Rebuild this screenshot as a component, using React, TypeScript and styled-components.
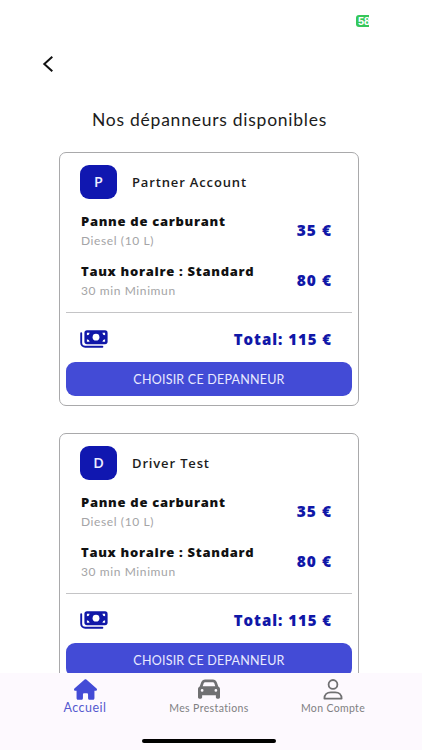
import React from "react";
import styled, { createGlobalStyle } from "styled-components";
import { FaHouse, FaCar } from "react-icons/fa6";

const GlobalStyle = createGlobalStyle`
  * { box-sizing: border-box; }
  body { margin: 0; background: #fff; font-family: Lato, "Open Sans", sans-serif; }
`;

const Screen = styled.div`
  position: relative;
  display: flex;
  flex-direction: column;
  width: 422px;
  height: 750px;
  overflow: hidden;
  background: #fff;
`;

const StatusBar = styled.div`
  flex: none;
  height: 48px;
  padding: 15px 53px 0 0;
  display: flex;
  justify-content: flex-end;
`;

const Battery = styled.div`
  width: 13px;
  height: 12px;
  padding-left: 2px;
  overflow: hidden;
  border-radius: 3px 0 0 3px;
  background: #35c759;
  color: #fff;
  font: 700 11px/12px "Liberation Sans", sans-serif;
`;

const Header = styled.header`
  flex: none;
  height: 32px;
  padding: 0 42px;
  display: flex;
  align-items: center;
`;

const Content = styled.main`
  flex: 1;
  min-height: 0;
  overflow: hidden;
  padding: 28px 62px 0 59px;
`;

const Line = styled.span<{
  $size: number;
  $spacing: number;
  $weight?: number;
  $color?: string;
  $height?: number;
}>`
  display: block;
  white-space: nowrap;
  font-size: ${(p) => p.$size}px;
  font-weight: ${(p) => p.$weight ?? 400};
  line-height: ${(p) => p.$height ?? 20}px;
  letter-spacing: ${(p) => p.$spacing}px;
  color: ${(p) => p.$color ?? "#1c1c20"};
`;

const StrongLine = styled(Line)`
  font-family: "Open Sans", sans-serif;
`;

const Title = styled.h1`
  height: 44px;
  margin: 0;
  padding-left: 33px;
`;

const Card = styled.article`
  width: 300px;
  height: 254px;
  margin-bottom: 27px;
  padding: 0 6px;
  border: 1px solid #a9a9ab;
  border-radius: 7px;
`;

const Person = styled.div`
  display: flex;
  align-items: center;
  gap: 15px;
  padding: 12px 0 0 14px;
`;

const Avatar = styled.div`
  display: grid;
  place-items: center;
  width: 37px;
  height: 34px;
  border-radius: 9px;
  background: #1017b0;
`;

const PriceRow = styled.div`
  display: flex;
  align-items: center;
  justify-content: space-between;
  height: 50px;
  padding: 0 20px 0 15px;
`;

const ServiceText = styled.div`
  padding-top: 2px;
`;

const Prices = styled.div`
  padding-top: 6px;
`;

const TotalRow = styled.div`
  display: flex;
  align-items: center;
  justify-content: space-between;
  height: 51px;
  margin-top: 7px;
  padding: 2px 20px 0 14px;
  border-top: 1px solid #c4c4c6;
`;

const ChooseButton = styled.button`
  display: grid;
  place-items: center;
  width: 286px;
  height: 34px;
  margin-top: -1px;
  padding: 1px 0 0;
  border: 0;
  border-radius: 9px;
  background: #434bd6;
  font-family: inherit;
`;

const TabBar = styled.nav`
  flex: none;
  display: flex;
  height: 77px;
  padding: 0 27px 0 23px;
  background: #fdf9fe;
`;

const Tab = styled.div<{ $active?: boolean }>`
  flex: 1;
  display: flex;
  flex-direction: column;
  align-items: center;
  padding-top: 5px;
  color: ${(p) => (p.$active ? "#434bd6" : "#707072")};
`;

const TabIcon = styled.div`
  display: grid;
  place-items: center;
  height: 22px;
`;

const HomeIndicator = styled.div`
  position: absolute;
  left: 142px;
  bottom: 7px;
  width: 134px;
  height: 4px;
  border-radius: 2px;
  background: #000;
`;

const BackIcon = () => (
  <svg width="12" height="18" viewBox="0 0 12 18" fill="none" stroke="#111" strokeWidth="2">
    <path d="M10.3 1.8 2.3 9l8 7.2" />
  </svg>
);

const CashIcon = () => (
  <svg width="28" height="19" viewBox="0 0 28 19" fill="none">
    <path d="M1.2 3.2v9.6a4 4 0 0 0 4 4h17.2" stroke="#1017a8" strokeWidth="1.9" strokeLinecap="round" />
    <rect x="4.4" y=".3" width="23.2" height="13.9" rx="2.6" fill="#1017a8" />
    <circle cx="16" cy="7.2" r="3.4" fill="#fff" />
    <path
      d="M6.9 5.2V2.7h2.7A2.7 2.7 0 0 1 6.9 5.2ZM25.1 5.2V2.7h-2.7a2.7 2.7 0 0 0 2.7 2.5ZM6.9 9.3v2.5h2.7a2.7 2.7 0 0 0-2.7-2.5ZM25.1 9.3v2.5h-2.7a2.7 2.7 0 0 1 2.7-2.5Z"
      fill="#fff"
    />
  </svg>
);

const UserIcon = () => (
  <svg width="20" height="21" viewBox="0 0 20 21" fill="none" stroke="currentColor" strokeWidth="1.8">
    <circle cx="10" cy="5.4" r="4.4" />
    <path d="M1.4 19.6c0-4 2.7-6.3 6.4-6.3h4.4c3.7 0 6.4 2.3 6.4 6.3Z" strokeLinejoin="round" />
  </svg>
);

const NAVY = "#1017a8";

const services = [
  { name: "Panne de carburant", detail: "Diesel (10 L)", price: "35 €" },
  { name: "Taux horaire : Standard", detail: "30 min Minimun", price: "80 €" },
];

const ProviderCard = ({ name }: { name: string }) => (
  <Card>
    <Person>
      <Avatar>
        <StrongLine $size={14.5} $weight={600} $spacing={0} $color="#eef">{name[0]}</StrongLine>
      </Avatar>
      <StrongLine $size={13} $weight={600} $spacing={0.85}>{name}</StrongLine>
    </Person>
    <Prices>
      {services.map((s) => (
        <PriceRow key={s.name}>
          <ServiceText>
            <StrongLine $size={13} $weight={800} $spacing={0.7} $height={19} $color="#111">{s.name}</StrongLine>
            <Line $size={12} $spacing={0.6} $height={19} $color="#a4a4a6">{s.detail}</Line>
          </ServiceText>
          <StrongLine $size={15.5} $weight={800} $spacing={1} $color={NAVY}>{s.price}</StrongLine>
        </PriceRow>
      ))}
    </Prices>
    <TotalRow>
      <CashIcon />
      <StrongLine $size={15} $weight={800} $spacing={0.95} $color={NAVY}>Total: 115 €</StrongLine>
    </TotalRow>
    <ChooseButton>
      <Line $size={12.5} $spacing={0.22} $color="#e9eaff">CHOISIR CE DEPANNEUR</Line>
    </ChooseButton>
  </Card>
);

export default function App() {
  return (
    <Screen>
      <GlobalStyle />
      <StatusBar><Battery>58</Battery></StatusBar>
      <Header><BackIcon /></Header>
      <Content>
        <Title><Line as="span" $size={17.5} $spacing={0.75} $height={24}>Nos dépanneurs disponibles</Line></Title>
        <ProviderCard name="Partner Account" />
        <ProviderCard name="Driver Test" />
      </Content>
      <TabBar>
        <Tab $active>
          <TabIcon><FaHouse size={23} /></TabIcon>
          <Line $size={12.5} $spacing={0.5} $height={16} $color="#5459cf">Accueil</Line>
        </Tab>
        <Tab>
          <TabIcon><FaCar size={22} /></TabIcon>
          <Line $size={10.5} $spacing={0.38} $height={17} $color="#808082">Mes Prestations</Line>
        </Tab>
        <Tab>
          <TabIcon><UserIcon /></TabIcon>
          <Line $size={10.5} $spacing={0.35} $height={17} $color="#808082">Mon Compte</Line>
        </Tab>
      </TabBar>
      <HomeIndicator />
    </Screen>
  );
}
